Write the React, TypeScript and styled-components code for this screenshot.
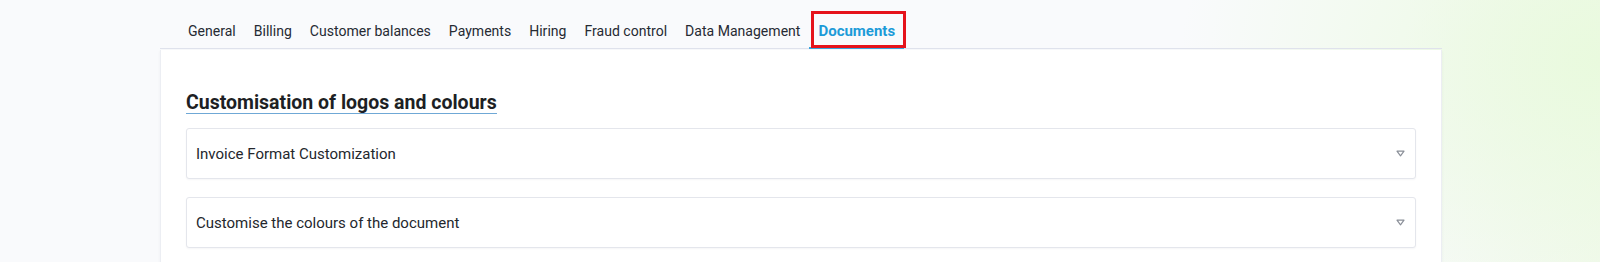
import React from "react";
import styled, { createGlobalStyle } from "styled-components";

const Global = createGlobalStyle`
  html, body { margin: 0; padding: 0; }
  body {
    width: 1600px;
    height: 262px;
    overflow: hidden;
    font-family: Roboto, "Liberation Sans", sans-serif;
    background:
      radial-gradient(ellipse 420px 300px at 1600px 60px, rgba(232, 250, 220, 0.9), rgba(240, 250, 235, 0) 100%),
      linear-gradient(90deg, #f9fafc 0%, #f9fafc 88%, #f2f9ee 100%);
  }
`;

const Page = styled.div`
  padding-left: 160px;
  width: 1282px;
`;

const TabBar = styled.nav`
  display: flex;
  align-items: flex-end;
  height: 49px;
  padding-left: 19px;
  box-sizing: border-box;
  border-bottom: 1px solid #dfe2ec;
`;

const Tab = styled.div<{ $active?: boolean }>`
  position: relative;
  height: 36px;
  display: flex;
  align-items: center;
  padding: 2px 9px 0;
  box-sizing: border-box;
  font-size: ${(p) => (p.$active ? "15px" : "14.05px")};
  font-weight: ${(p) => (p.$active ? 700 : 400)};
  color: ${(p) => (p.$active ? "#1c9bd8" : "#262a33")};
  border-bottom: 2px solid ${(p) => (p.$active ? "#3aa3dc" : "transparent")};
  margin-bottom: -1px;
`;

const Highlight = styled.span`
  position: absolute;
  left: 2px;
  right: -2px;
  top: -2px;
  bottom: -1px;
  border: 3px solid #e5131b;
  pointer-events: none;
`;

const Card = styled.section`
  background: #ffffff;
  border-left: 1px solid #eceef3;
  border-right: 1px solid #eceef3;
  box-shadow: 0 1px 3px rgba(30, 40, 60, 0.05);
  padding: 42px 25px 20px;
  margin-top: 1px;
`;

const Heading = styled.h2`
  display: inline-block;
  margin: 0 0 14px;
  font-size: 19.5px;
  line-height: 21px;
  font-weight: 700;
  color: #1d1f24;
  padding-bottom: 0;
  border-bottom: 1.5px solid #6fa8d6;
`;

const AccordionList = styled.div`
  display: flex;
  flex-direction: column;
  gap: 18px;
`;

const Accordion = styled.div`
  height: 51px;
  box-sizing: border-box;
  border: 1px solid #e4e6ec;
  border-radius: 3px;
  background: #fff;
  box-shadow: 0 1px 2px rgba(20, 30, 50, 0.04);
  display: flex;
  align-items: center;
  justify-content: space-between;
  padding: 0 10px 0 9px;
`;

const AccordionTitle = styled.span`
  font-size: 15px;
  color: #24272d;
`;

const Chevron = () => (
  <svg width="9" height="7" viewBox="0 0 9 7">
    <path d="M1 1.2 H8 L4.5 5.8 Z" fill="none" stroke="#8a8f98" strokeWidth="1.2" strokeLinejoin="round" />
  </svg>
);

const tabs = [
  "General",
  "Billing",
  "Customer balances",
  "Payments",
  "Hiring",
  "Fraud control",
  "Data Management",
  "Documents",
];

export default function App() {
  return (
    <>
      <Global />
      <Page>
        <TabBar>
          {tabs.map((t) => (
            <Tab key={t} $active={t === "Documents"}>
              {t}
              {t === "Documents" && <Highlight />}
            </Tab>
          ))}
        </TabBar>
        <Card>
          <Heading>Customisation of logos and colours</Heading>
          <AccordionList>
            <Accordion>
              <AccordionTitle>Invoice Format Customization</AccordionTitle>
              <Chevron />
            </Accordion>
            <Accordion>
              <AccordionTitle>Customise the colours of the document</AccordionTitle>
              <Chevron />
            </Accordion>
          </AccordionList>
        </Card>
      </Page>
    </>
  );
}
